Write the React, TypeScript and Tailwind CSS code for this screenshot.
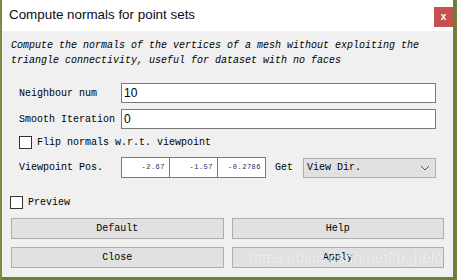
const mono = { fontFamily: '"Liberation Mono", "DejaVu Sans Mono", monospace' };

function Check() {
  return <div className="w-[13px] h-[13px] border border-[#333333] bg-white shrink-0"></div>;
}

function Coord({ value }: { value: string }) {
  return (
    <div className="w-[49px] h-[21px] border border-[#7a7a7a] bg-white flex items-center justify-end pr-[4px] -ml-px first:ml-0">
      <span className="text-[7px] leading-none text-[#1c2a70] tracking-[0.5px]" style={mono}>{value}</span>
    </div>
  );
}

function Btn({ label }: { label: string }) {
  return (
    <button className="flex-1 h-[21px] bg-[#e1e1e1] border border-[#adadad] text-[10px] leading-[13px] text-black flex items-center justify-center" style={mono}>
      {label}
    </button>
  );
}

export default function App() {
  return (
    <div className="w-[457px] h-[280px] bg-[#6f7d3c] relative overflow-hidden">
      <div className="absolute left-0 top-0 w-[2px] h-full bg-[#7c8a45]"></div>
      <div className="ml-[2px] w-[451px] h-[277px] bg-[#f0f0f0] flex flex-col">
        {/* title bar */}
        <div className="h-[31px] bg-white flex items-start justify-between shrink-0">
          <span className="pl-[7px] pt-[6px] text-[13.4px] leading-[18px] text-[#0b0b1a]" style={{ fontFamily: '"Liberation Sans", Arial, sans-serif' }}>
            Compute normals for point sets
          </span>
          <div className="mt-[7px] w-[19px] h-[20px] bg-[#c75050] flex items-center justify-center">
            <span className="text-white text-[10px] font-bold leading-none" style={{ fontFamily: '"Liberation Sans", sans-serif' }}>x</span>
          </div>
        </div>

        {/* description */}
        <div className="pl-[9px] pt-[7px] h-[37px] shrink-0 italic text-[10px] leading-[15px] text-black" style={mono}>
          <div>Compute the normals of the vertices of a mesh without exploiting the</div>
          <div>triangle connectivity, useful for dataset with no faces</div>
        </div>

        {/* params */}
        <div className="px-[17px] mt-[15px] flex flex-col">
          <div className="flex items-center h-[20px]">
            <span className="w-[102px] text-[10px] leading-[13px] text-black" style={mono}>Neighbour num</span>
            <div className="flex-1 h-[20px] border border-[#7a7a7a] bg-white flex items-center pl-[2px] text-[12px] leading-[14px] text-black" style={{ fontFamily: '"Liberation Sans", sans-serif' }}>10</div>
          </div>
          <div className="flex items-center h-[20px] mt-[6px]">
            <span className="w-[102px] text-[10px] leading-[13px] text-black" style={mono}>Smooth Iteration</span>
            <div className="flex-1 h-[20px] border border-[#7a7a7a] bg-white flex items-center pl-[2px] text-[12px] leading-[14px] text-black" style={{ fontFamily: '"Liberation Sans", sans-serif' }}>0</div>
          </div>
          <div className="flex items-center h-[13px] mt-[7px] gap-[5px]">
            <Check />
            <span className="text-[10px] leading-[13px] text-black" style={mono}>Flip normals w.r.t. viewpoint</span>
          </div>
          <div className="flex items-center mt-[8px] h-[21px]">
            <span className="w-[102px] text-[10px] leading-[13px] text-black" style={mono}>Viewpoint Pos.</span>
            <div className="flex">
              <Coord value="-2.67" />
              <Coord value="-1.57" />
              <Coord value="-0.2786" />
            </div>
            <span className="ml-[9px] w-[28px] text-[10px] leading-[13px] text-black" style={mono}>Get</span>
            <div className="flex-1 h-[20px] bg-[#e1e1e1] border border-[#adadad] flex items-center justify-between pl-[3px] pr-[5px]">
              <span className="text-[10px] leading-[13px] text-black" style={mono}>View Dir.</span>
              <svg width="10" height="6" viewBox="0 0 10 6">
                <polyline points="1,1 5,5 9,1" fill="none" stroke="#555555" strokeWidth="1" />
              </svg>
            </div>
          </div>
        </div>

        {/* preview */}
        <div className="pl-[8px] mt-[18px] h-[13px] flex items-center gap-[5px]">
          <Check />
          <span className="text-[10px] leading-[13px] text-black" style={mono}>Preview</span>
        </div>

        {/* buttons */}
        <div className="px-[9px] mt-[9px] flex flex-col gap-[8px]">
          <div className="flex gap-[8px]">
            <Btn label="Default" />
            <Btn label="Help" />
          </div>
          <div className="flex gap-[8px]">
            <Btn label="Close" />
            <Btn label="Apply" />
          </div>
        </div>
      </div>

      {/* watermark */}
      <span
        className="absolute left-[249px] top-[250px] text-[15.5px] text-white/75 leading-none [text-shadow:0_0_1px_rgba(0,0,0,0.15)]"
        style={{ fontFamily: '"Liberation Sans", Arial, sans-serif' }}
      >
        https://blog.csdn.net/fb_help
      </span>
    </div>
  );
}
